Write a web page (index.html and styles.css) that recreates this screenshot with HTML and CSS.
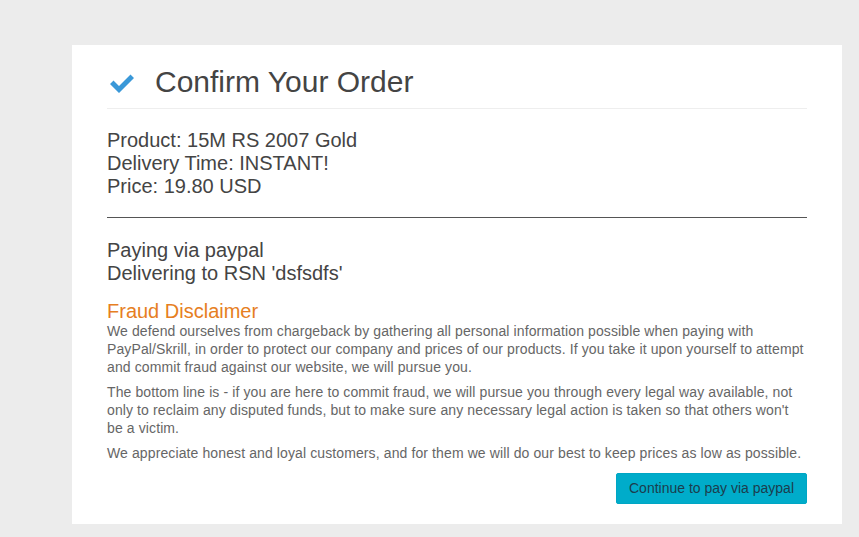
FILE: index.html
```html
<!DOCTYPE html>
<html>
<head>
<meta charset="utf-8">
<link rel="stylesheet" href="styles.css">
</head>
<body>
<div class="page">
  <div class="card">
    <div class="header">
      <svg class="check" viewBox="0 0 28 22" width="28" height="22"><path d="M2 12 L5.5 8.5 L11 14 L22.5 2.5 L26 6 L11 21 Z" fill="#3a98d8"/></svg>
      <h1 class="title">Confirm Your Order</h1>
    </div>
    <div class="details first">
      <div>Product: 15M RS 2007 Gold</div>
      <div>Delivery Time: INSTANT!</div>
      <div>Price: 19.80 USD</div>
    </div>
    <hr class="divider">
    <div class="details second">
      <div>Paying via paypal</div>
      <div>Delivering to RSN 'dsfsdfs'</div>
    </div>
    <h2 class="fraud">Fraud Disclaimer</h2>
    <p class="text">We defend ourselves from chargeback by gathering all personal information possible when paying with PayPal/Skrill, in order to protect our company and prices of our products. If you take it upon yourself to attempt and commit fraud against our website, we will pursue you.</p>
    <p class="text">The bottom line is - if you are here to commit fraud, we will pursue you through every legal way available, not only to reclaim any disputed funds, but to make sure any necessary legal action is taken so that others won't be a victim.</p>
    <p class="text">We appreciate honest and loyal customers, and for them we will do our best to keep prices as low as possible.</p>
    <div class="actions">
      <button class="btn">Continue to pay via paypal</button>
    </div>
  </div>
</div>
</body>
</html>
```

FILE: styles.css
```css
html, body {
  margin: 0;
  padding: 0;
  background: #ececec;
  font-family: "Liberation Sans", Arial, sans-serif;
}
.page {
  padding: 45px 17px 14px 72px;
}
.card {
  background: #fff;
  padding: 0 35px 20px 35px;
}
.header {
  display: flex;
  align-items: center;
  padding: 20px 0 10px 0;
  border-bottom: 1px solid #eeeeee;
}
.check {
  margin-left: 1px;
  margin-right: 19px;
  margin-top: 2px;
}
.title {
  margin: 0;
  font-weight: normal;
  font-size: 30px;
  line-height: 33px;
  color: #444;
}
.details {
  font-size: 20px;
  line-height: 23px;
  color: #444;
}
.details.first {
  margin-top: 20px;
}
.details.second {
  margin-top: 21px;
}
.divider {
  border: 0;
  border-top: 1px solid #555;
  margin: 19px 0 0 0;
  height: 0;
}
.fraud {
  margin: 16px 0 0 0;
  font-weight: normal;
  font-size: 20px;
  line-height: 21px;
  color: #e67e22;
}
.text {
  margin: 0 0 7px 0;
  font-size: 14px;
  line-height: 18px;
  letter-spacing: 0.11px;
  color: #666;
}
.actions {
  display: flex;
  justify-content: flex-end;
  margin-top: 11px;
}
.btn {
  font-family: "Liberation Sans", Arial, sans-serif;
  font-size: 14px;
  line-height: 17px;
  padding: 6px 12px;
  background: #00acca;
  color: #1c3d4d;
  border: 1px solid #00a6c4;
  border-radius: 2px;
}
```
